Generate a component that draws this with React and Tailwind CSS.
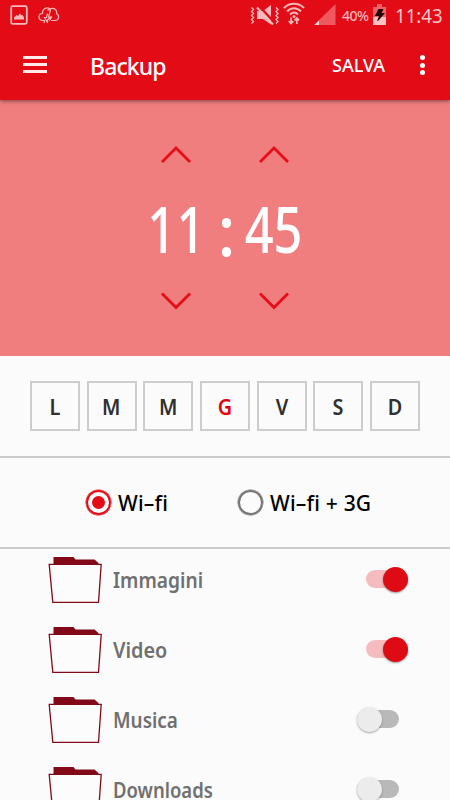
import React from 'react';

const days = [
  { label: 'L' },
  { label: 'M' },
  { label: 'M' },
  { label: 'G', active: true },
  { label: 'V' },
  { label: 'S' },
  { label: 'D' },
];

const folders = [
  { name: 'Immagini', on: true, text: 'scale-x-[0.870]' },
  { name: 'Video', on: true, text: 'scale-x-[0.900]' },
  { name: 'Musica', on: false, text: 'scale-x-[0.860]' },
  { name: 'Downloads', on: false, text: 'scale-x-[0.840]' },
];

function StatusBar() {
  return (
    <div className="flex h-8 shrink-0 items-start text-[#f9b9bc]">
      <svg className="ml-[10px] mt-[5px] shrink-0" width="18" height="20" viewBox="0 0 18 20">
        <rect x="1.2" y="1.2" width="15.6" height="17.6" rx="1.5" fill="none" stroke="currentColor" strokeWidth="1.8" />
        <path d="M4 14.5V12.500l2.500-2.500 1.500 1 2-2.500 1.500 2 1-.5 1.500 2.500v2z" fill="currentColor" />
      </svg>
      <svg className="ml-[10px] mt-[6px] shrink-0" width="22" height="18" viewBox="0 0 22 18" fill="none" stroke="currentColor" strokeWidth="1.2">
        <path d="M7 14.500H5C2.500 14.500 1 12.800 1 10.800 1 8.800 2.600 7.500 4.500 7.500 4 2.500 9 .5 12 3c4-2 7.500 1 6.500 4.500 3.500 2 2.500 7-1.500 7h-4" />
        <path d="M9.500 4.500c1-1 2.500-1.200 3-.5L10.500 11h2l-4 4-2-3.500h2l1-4M6.500 15l-.5 2M10 14.500l-1 2.500M14 10.500l-2.500 4" />
      </svg>
      <svg className="ml-[190px] mt-[4px] shrink-0" width="30" height="22" viewBox="0 0 30 22">
        <path d="M7 7h6l8-6v19.500L13 15H7z" fill="currentColor" />
        <path d="M9 2 25 19" stroke="#e30b15" strokeWidth="2.500" />
        <path d="M7 3.500 23 20.500" stroke="currentColor" strokeWidth="2" />
        <path d="m1.500 3.500 2 2-2 2 2 2-2 2 2 2-2 2 2 2-2 2M26 3.500l2 2-2 2 2 2-2 2 2 2-2 2 2 2-2 2" fill="none" stroke="currentColor" strokeWidth="1.400" />
      </svg>
      <svg className="ml-[3px] mt-[2px] shrink-0" width="22" height="24" viewBox="0 0 22 24" fill="none" stroke="currentColor" strokeWidth="2">
        <path d="M1 6C6 .2 16 .2 21 6M4 9.500c4-4.300 10-4.300 14 0M7 12.500c2.500-2.500 5.500-2.500 8 0" />
        <circle cx="11" cy="14.500" r="1.500" fill="currentColor" stroke="none" />
        <path d="M8 15.500v6m-2.300-2.300L8 21.500l2.300-2.300M13.800 22v-6m-2.300 2.300 2.300-2.300 2.300 2.300" strokeWidth="1.700" />
      </svg>
      <svg className="ml-[9px] mt-[4px] shrink-0" width="22" height="21" viewBox="0 0 22 21">
        <path d="M21.500 0v21H0z" fill="#ef595f" />
        <path d="M5 16.500V21H.5z" fill="#ffd9db" />
      </svg>
      <span className="ml-[6px] mt-[6px] w-[29px] whitespace-nowrap text-[14px] font-medium leading-5 tracking-[-0.500px]">40%</span>
      <svg className="ml-[2px] mt-[4px] shrink-0" width="13" height="21" viewBox="0 0 13 21">
        <path d="M0 3h4V0h5v3h4v18H0z" fill="#ef6469" />
        <path d="M0 13h13v8H0z" fill="#f9c2c4" />
        <path d="M5.500 5h5L8.500 9H12l-6.500 7.500-1.500.5 2-5H1.800z" fill="#210708" />
      </svg>
      <span className="ml-[9px] mt-[4px] origin-left scale-x-[0.930] whitespace-nowrap text-[20px] leading-6 text-[#fbc8ca]">11:43</span>
    </div>
  );
}

function AppBar() {
  return (
    <div className="flex h-[68px] items-start text-white">
      <button aria-label="Menu" className="ml-[23px] mt-[24px] flex w-6 flex-col gap-[4px]">
        <span className="h-[3px] w-6 bg-[#ffe9ea]" />
        <span className="h-[3px] w-6 bg-[#ffe9ea]" />
        <span className="h-[3px] w-6 bg-[#ffe9ea]" />
      </button>
      <h1 className="ml-[43px] mt-[18px] w-[76px] whitespace-nowrap text-[23px] font-medium leading-8 tracking-[-0.900px]">Backup</h1>
      <button className="ml-[166px] mt-[21px] w-[54px] whitespace-nowrap text-left text-[18px] font-medium leading-6">SALVA</button>
      <button aria-label="Altro" className="ml-[34px] mt-[23px] flex flex-col gap-[2.500px]">
        <span className="size-[5px] rounded-full bg-white" />
        <span className="size-[5px] rounded-full bg-white" />
        <span className="size-[5px] rounded-full bg-white" />
      </button>
    </div>
  );
}

function Chevron({ down }) {
  return (
    <svg width="32" height="20" viewBox="0 0 32 20" fill="none" stroke="#e60d19" strokeWidth="2.800">
      <path d={down ? 'M2 2.500 16 16.500 30 2.500' : 'M2 17 16 3 30 17'} />
    </svg>
  );
}

function TimePicker() {
  return (
    <section className="flex h-64 justify-center bg-[#f07e7e] pr-px text-white">
      <div className="flex w-[82px] flex-col items-center pt-[45px]">
        <Chevron />
        <span className="ml-[2px] mt-[22px] h-[84px] origin-center scale-x-[0.780] text-[64px] font-medium leading-[84px] tracking-[1px]">11</span>
        <span className="mt-[20px]"><Chevron down /></span>
      </div>
      <div className="flex w-4 flex-col items-center gap-[19px] pl-[3px] pt-[118px]">
        <span className="h-[10px] w-[9px] rounded-full bg-white" />
        <span className="h-[10px] w-[9px] rounded-full bg-white" />
      </div>
      <div className="flex w-[82px] flex-col items-center pt-[45px]">
        <Chevron />
        <span className="mt-[22px] h-[84px] origin-center scale-x-[0.790] text-[64px] font-medium leading-[84px]">45</span>
        <span className="mt-[20px]"><Chevron down /></span>
      </div>
    </section>
  );
}

function DayPicker() {
  return (
    <section className="flex h-[102px] justify-between border-b-2 border-[#cbcbcb] px-[30px] pt-[25px]">
      {days.map((day, i) => (
        <button
          key={i}
          className={
            'flex size-[50px] items-center justify-center border-2 border-[#cdcdcd] pt-px text-[22px] font-semibold ' +
            (day.active ? 'text-[#e6000b]' : 'text-[#303030]')
          }
        >
          <span className="scale-x-[0.900]">{day.label}</span>
        </button>
      ))}
    </section>
  );
}

function NetworkPicker() {
  return (
    <section className="flex h-[91px] items-center border-b-2 border-[#cbcbcb] pl-[86px] text-[21px] font-medium text-black">
      <label className="flex w-[152px] items-center">
        <span className="flex size-[25px] items-center justify-center rounded-full border-[2.500px] border-[#e30b15] ring-[0.500px] ring-[#e30b15]">
          <span className="size-[13px] rounded-full bg-[#e30b15]" />
        </span>
        <span className="ml-[7px] mt-[2px] whitespace-nowrap tracking-[0.200px]">Wi–fi</span>
      </label>
      <label className="flex items-center">
        <span className="size-[25px] rounded-full border-[2.500px] border-[#757575] ring-[0.500px] ring-[#757575]" />
        <span className="ml-[7px] mt-[2px] whitespace-nowrap tracking-[0.200px]">Wi–fi + 3G</span>
      </label>
    </section>
  );
}

function FolderIcon() {
  return (
    <svg className="shrink-0" width="54" height="48" viewBox="0 0 54 48">
      <path d="M5.500 7V0h20l2 2.500h19l4 3.500V8h-45z" fill="#820a18" />
      <path d="M1.200 7.300h52L50.500 45.300H4.800z" fill="#fcfcfc" stroke="#820a18" strokeWidth="1.300" />
    </svg>
  );
}

function Switch({ on }) {
  return on ? (
    <span className="flex h-[18px] w-[42px] items-center justify-end rounded-full bg-[#f5bbbe]">
      <span className="size-[25px] shrink-0 rounded-full bg-[#df0b14] shadow-[0_1px_2px_rgba(0,0,0,0.4)]" />
    </span>
  ) : (
    <span className="flex h-[18px] w-[42px] items-center rounded-full bg-[#b9b9b9]">
      <span className="size-[25px] shrink-0 rounded-full bg-[#ececec] shadow-[0_1px_2px_rgba(0,0,0,0.35)]" />
    </span>
  );
}

function FolderList() {
  return (
    <section className="h-[251px] overflow-hidden">
      {folders.map((folder) => (
        <div key={folder.name} className="flex h-[70px] items-start pl-[48px] pt-2">
          <FolderIcon />
          <span className={'ml-[11px] mt-[8px] w-[142px] origin-left whitespace-nowrap text-[22px] font-semibold leading-7 text-[#707070] ' + folder.text}>
            {folder.name}
          </span>
          <span className={folder.on ? 'ml-[111px] mt-[13px]' : 'ml-[102px] mt-[13px]'}>
            <Switch on={folder.on} />
          </span>
        </div>
      ))}
    </section>
  );
}

export default function App() {
  return (
    <main className="flex h-[800px] w-[450px] flex-col overflow-hidden bg-[#fbfbfb] font-['Noto_Sans','Open_Sans',sans-serif]">
      <header className="relative z-10 h-[100px] shrink-0 bg-[#e30b15] shadow-[0_1px_4px_rgba(0,0,0,0.5)]">
        <StatusBar />
        <AppBar />
      </header>
      <TimePicker />
      <DayPicker />
      <NetworkPicker />
      <FolderList />
    </main>
  );
}
